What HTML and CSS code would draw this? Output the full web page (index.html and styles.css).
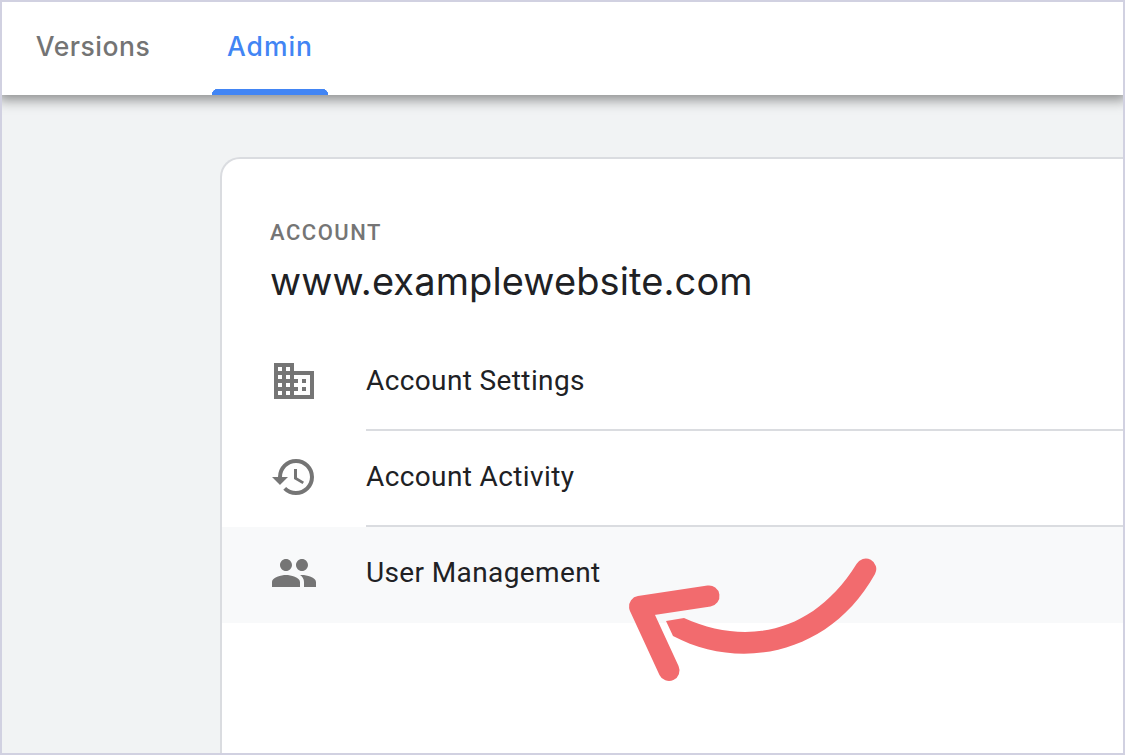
FILE: index.html
```html
<!DOCTYPE html>
<html lang="en">
<head>
<meta charset="utf-8">
<title>Admin</title>
<link rel="stylesheet" href="styles.css">
</head>
<body>
<div class="frame">
  <nav class="tabs">
    <a class="tab tab-versions">Versions</a>
    <a class="tab tab-admin">Admin</a>
  </nav>
  <main class="content">
    <section class="card">
      <header class="card-head">
        <div class="label">ACCOUNT</div>
        <h1 class="site">www.examplewebsite.com</h1>
      </header>
      <ul class="menu">
        <li class="item">
          <svg class="icon" viewBox="0 0 24 24"><path d="M12 7V3H2v18h20V7H12zM6 19H4v-2h2v2zm0-4H4v-2h2v2zm0-4H4V9h2v2zm0-4H4V5h2v2zm4 12H8v-2h2v2zm0-4H8v-2h2v2zm0-4H8V9h2v2zm0-4H8V5h2v2zm10 12h-8v-2h2v-2h-2v-2h2v-2h-2V9h8v10zm-2-8h-2v2h2v-2zm0 4h-2v2h2v-2z"/></svg>
          <div class="text">Account Settings</div>
        </li>
        <li class="item">
          <svg class="icon" viewBox="0 0 24 24"><path d="M13 3a9 9 0 0 0-9 9H1l3.89 3.89.07.14L9 12H6c0-3.87 3.13-7 7-7s7 3.13 7 7-3.13 7-7 7c-1.93 0-3.68-.79-4.94-2.06l-1.42 1.42A8.954 8.954 0 0 0 13 21a9 9 0 0 0 0-18zm-1 5v5l4.28 2.54.72-1.21-3.5-2.08V8H12z"/></svg>
          <div class="text">Account Activity</div>
        </li>
        <li class="item selected">
          <svg class="icon" viewBox="0 0 24 24"><path d="M16 11c1.66 0 2.99-1.34 2.99-3S17.66 5 16 5s-3 1.34-3 3 1.34 3 3 3zm-8 0c1.66 0 2.99-1.34 2.99-3S9.66 5 8 5 5 6.34 5 8s1.34 3 3 3zm0 2c-2.33 0-7 1.17-7 3.5V19h14v-2.5C15 14.17 10.33 13 8 13zm8 0c-.29 0-.62.02-.97.05 1.16.84 1.97 1.97 1.97 3.45V19h6v-2.5c0-2.33-4.67-3.5-7-3.5z"/></svg>
          <div class="text">User Management</div>
        </li>
      </ul>
    </section>
  </main>
  <svg class="arrow" viewBox="620 550 265 140">
    <path class="arrow-head" d="M709 596L639.5 606.5L669 670.5"/>
    <path class="arrow-tail" d="M666 621L684 618C746 646 813 634 856.5 564A10.5 10.5 0 0 1 875 574C829 656 739 671 673 636Z"/>
  </svg>
</div>
</body>
</html>
```
FILE: styles.css
```css
* { box-sizing: border-box; }
body { margin: 0; }
.frame {
  position: relative;
  display: flex;
  flex-direction: column;
  width: 1125px;
  height: 755px;
  overflow: hidden;
  border: 2px solid #d1d1e1;
  background: #f1f3f4;
  font-family: Roboto, sans-serif;
}
.tabs {
  display: flex;
  flex: none;
  gap: 46px;
  height: 93px;
  padding-left: 18px;
  background: #fff;
  box-shadow: 0 1px 12px 4px rgba(0, 0, 0, .42);
  z-index: 1;
}
.tab {
  display: flex;
  justify-content: center;
  height: 93px;
  line-height: 89px;
  color: #747474;
  font-family: Inter, sans-serif;
  font-weight: 500;
  font-size: 26.5px;
}
.tab-versions { width: 146px; letter-spacing: .5px; }
.tab-admin {
  width: 116px;
  color: #4285f4;
  letter-spacing: 1px;
  background: radial-gradient(circle at 6px 6px, #4285f4 6px, transparent 6.5px) 0 87px / 6px 6px no-repeat,
    radial-gradient(circle at 0 6px, #4285f4 6px, transparent 6.5px) 110px 87px / 6px 6px no-repeat,
    linear-gradient(#4285f4, #4285f4) 6px 87px / 104px 6px no-repeat;
}
.content { display: flex; flex: 1; padding: 62px 0 0 218px; }
.card {
  flex: 1;
  border: solid #dadce0;
  border-width: 2px 0 0 2px;
  border-top-left-radius: 20px;
  background: #fff;
}
.card-head { height: 176px; padding: 60px 0 0 48px; }
.label {
  height: 28px;
  line-height: 28px;
  color: #757575;
  font-size: 22px;
  font-weight: 500;
  letter-spacing: 1.5px;
}
.site {
  margin: 0;
  padding-top: 8px;
  line-height: 52px;
  color: #202124;
  font-family: Inter, sans-serif;
  font-size: 38px;
  font-weight: 400;
  letter-spacing: .12px;
}
.menu { margin: 0; padding: 0; list-style: none; }
.item { display: flex; height: 96px; padding-left: 48px; gap: 48px; }
.icon { flex: none; width: 48px; height: 48px; margin-top: 22px; fill: #757575; }
.text {
  flex: 1;
  border-bottom: 2px solid #dadce0;
  line-height: 92px;
  color: #202124;
  font-size: 28px;
  letter-spacing: .38px;
}
.selected { background: #f8f9fa; }
.selected .text { border: 0; }
.arrow { position: absolute; left: 618px; top: 548px; width: 265px; height: 140px; }
.arrow-head { fill: none; stroke: #f26b6e; stroke-width: 21; stroke-linecap: round; stroke-linejoin: round; }
.arrow-tail { fill: #f26b6e; }
```
